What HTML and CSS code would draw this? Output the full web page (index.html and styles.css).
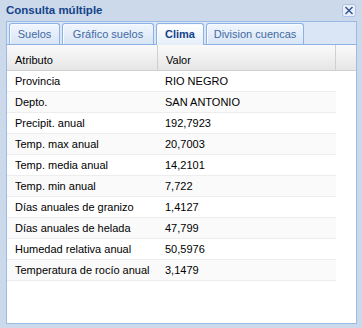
FILE: index.html
```html
<!DOCTYPE html>
<html lang="es">
<head>
	<meta charset="UTF-8">
	<title>Consulta múltiple</title>
	<link rel="stylesheet" href="styles.css">
</head>
<body>
<div class="win">
	<div class="winHeader">
		<span class="winTitle">Consulta múltiple</span>
		<a class="winClose" title="Cerrar">
			<svg width="14" height="13" viewBox="0 0 14 13">
				<rect x="0.5" y="0.5" width="13" height="12" rx="2" fill="#e8eff9" stroke="#a9c1e4"/>
				<path d="M3.5 3 L10.5 10 M10.5 3 L3.5 10" stroke="#2f528a" stroke-width="1.4" fill="none"/>
			</svg>
		</a>
	</div>
	<ul class="tabStrip">
		<li class="tab tabSuelos">Suelos</li>
		<li class="tab tabGrafico">Gráfico suelos</li>
		<li class="tab tabClima active">Clima</li>
		<li class="tab tabCuencas">Division cuencas</li>
	</ul>
	<div class="panelBody">
		<div class="gridHd">
			<div class="hdCell colAttr">Atributo</div>
			<div class="hdCell colVal">Valor</div>
			<div class="hdFiller"></div>
		</div>
		<div class="gridRows">
			<div class="row"><div class="cell colAttr">Provincia</div><div class="cell colVal">RIO NEGRO</div></div>
			<div class="row"><div class="cell colAttr">Depto.</div><div class="cell colVal">SAN ANTONIO</div></div>
			<div class="row"><div class="cell colAttr">Precipit. anual</div><div class="cell colVal">192,7923</div></div>
			<div class="row"><div class="cell colAttr">Temp. max anual</div><div class="cell colVal">20,7003</div></div>
			<div class="row"><div class="cell colAttr">Temp. media anual</div><div class="cell colVal">14,2101</div></div>
			<div class="row"><div class="cell colAttr">Temp. min anual</div><div class="cell colVal">7,722</div></div>
			<div class="row"><div class="cell colAttr">Días anuales de granizo</div><div class="cell colVal">1,4127</div></div>
			<div class="row"><div class="cell colAttr">Días anuales de helada</div><div class="cell colVal">47,799</div></div>
			<div class="row"><div class="cell colAttr">Humedad relativa anual</div><div class="cell colVal">50,5976</div></div>
			<div class="row"><div class="cell colAttr">Temperatura de rocío anual</div><div class="cell colVal">3,1479</div></div>
		</div>
	</div>
</div>
</body>
</html>
```
FILE: styles.css
```css
body {
	margin:0;
	font-family: "Liberation Sans", Arial, sans-serif;
	font-size:11px;
}

.win {
	width:362px;
	height:328px;
	box-sizing: border-box;
	padding: 0 5px 4px 6px;
	background: #cbd9ea;
	display:flex;
	flex-direction: column;
}

.winHeader {
	height:21px;
	display:flex;
	align-items: flex-start;
}
.winTitle {
	line-height:20px;
	font-weight: bold;
	font-size:11.5px;
	color:#15428b;
}
.winClose {
	margin-left:auto;
	margin-top:4px;
	margin-right:1px;
	line-height:0;
}

.tabStrip {
	list-style: none;
	margin:0;
	padding: 1px 0 0 2px;
	display:flex;
	gap:2px;
	background: #dae6f5;
	border:1px solid #99bbe8;
	border-bottom-color: #8db2e3;
	height:21px;
}
.tab {
	box-sizing: border-box;
	height:21px;
	line-height:20px;
	text-align: center;
	white-space: nowrap;
	font-size:11px;
	color:#416aa3;
	border:1px solid #8db2e3;
	border-bottom:none;
	border-radius: 3px 3px 0 0;
	background: linear-gradient(#f1f6fd, #d8e5f5);
	box-shadow: inset 1px 1px 0 #f7fafe;
}
.tabSuelos { width:51px; }
.tabGrafico { width:92px; }
.tabClima { width:48px; }
.tabCuencas { width:98px; }
.tab.active {
	height:22px;
	margin-bottom:-1px;
	font-weight: bold;
	color:#15428b;
	background: linear-gradient(#ffffff, #e6eef9);
}

.panelBody {
	flex:1;
	background:#fff;
	border:1px solid #99bbe8;
	border-top:none;
}

.gridHd {
	display:flex;
	height:26px;
	background: linear-gradient(#fafafa, #e6e6e6);
	border-bottom:1px solid #d0d0d0;
	box-sizing: border-box;
}
.hdCell {
	box-sizing: border-box;
	padding: 8px 0 0 8px;
	border-right:1px solid #d0d0d0;
	line-height:14px;
}
.hdFiller {
	flex:1;
}

.colAttr {
	width:151px;
	box-sizing: border-box;
}
.colVal {
	width:178px;
	box-sizing: border-box;
}

.gridRows {
	width:329px;
}
.row {
	display:flex;
	height:21px;
	box-sizing: border-box;
	border-bottom:1px solid #ededed;
}
.row:nth-child(even) {
	background:#fafafa;
}
.cell {
	line-height:20px;
	padding-left:8px;
	white-space: nowrap;
	color:#000;
}
.cell.colVal {
	padding-left:7px;
}
```
